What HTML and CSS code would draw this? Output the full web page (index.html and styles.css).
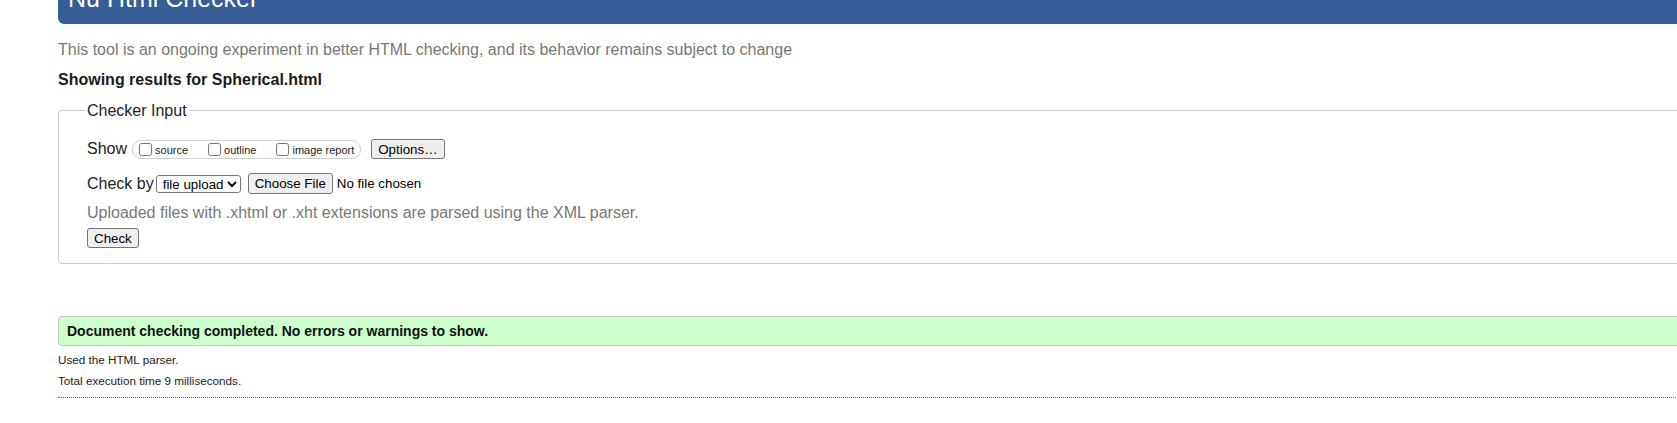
FILE: index.html
```html
<!DOCTYPE html>
<html lang="en">
<head>
<meta charset="utf-8">
<title>Nu Html Checker</title>
<link rel="stylesheet" href="styles.css">
</head>
<body>
<div class="page">
  <h1 class="title">Nu Html Checker</h1>
  <p class="intro">This tool is an ongoing experiment in better HTML checking, and its behavior remains subject to change</p>
  <h2 class="showing">Showing results for Spherical.html</h2>
  <form class="checker">
    <fieldset class="input-set">
      <legend class="legend">Checker Input</legend>
      <div class="row row-show">
        <span class="label">Show</span>
        <span class="group">
          <label class="opt"><input type="checkbox" class="cb"><span>source</span></label>
          <label class="opt"><input type="checkbox" class="cb"><span>outline</span></label>
          <label class="opt last"><input type="checkbox" class="cb"><span>image report</span></label>
        </span>
        <button type="button" class="btn btn-options">Options…</button>
      </div>
      <div class="row row-by">
        <span class="label label-by">Check by</span>
        <select class="sel"><option>file upload</option></select>
        <input type="file" class="file">
      </div>
      <p class="hint">Uploaded files with .xhtml or .xht extensions are parsed using the XML parser.</p>
      <div class="row row-submit">
        <button type="button" class="btn">Check</button>
      </div>
    </fieldset>
  </form>
  <section class="results">
    <p class="ok">Document checking completed. No errors or warnings to show.</p>
    <p class="detail">Used the HTML parser.</p>
    <p class="detail">Total execution time 9 milliseconds.</p>
    <hr class="sep">
  </section>
</div>
</body>
</html>
```
FILE: styles.css
```css
html {
  overflow: hidden;
  background: #fff;
}
body {
  margin: 0;
  font-family: "Liberation Sans", Arial, sans-serif;
  color: #222;
}
.page {
  margin-left: 58px;
  width: 1700px;
}
.title {
  margin: -16px 0 0;
  padding: 0 10px 11px;
  font-size: 25px;
  line-height: 29px;
  font-weight: normal;
  color: #fff;
  background: #365d95;
  border-radius: 0 0 6px 6px;
}
.intro {
  margin: 17px 0 0;
  font-size: 16px;
  line-height: 18px;
  color: #777;
}
.showing {
  margin: 12px 0 0;
  font-size: 16px;
  line-height: 18px;
  font-weight: bold;
  color: #1a1a1a;
}
.checker {
  margin: 12px 0 0;
}
.input-set {
  margin: 0;
  padding: 19px 20px 15px 28px;
  border: 1px solid #cbcbcb;
  border-radius: 4px;
}
.legend {
  margin-left: -2px;
  padding: 0 2px;
  font-size: 16px;
  line-height: 19px;
  color: #222;
}
.row {
  display: flex;
  align-items: center;
}
.row-show {
  height: 20px;
}
.row-by {
  height: 21px;
  margin-top: 14px;
}
.row-submit {
  height: 20px;
  margin-top: 6px;
}
.label {
  font-size: 16px;
  line-height: 18px;
  margin-right: 5px;
}
.label-by {
  margin-right: 2px;
}
.group {
  display: inline-flex;
  align-items: center;
  height: 17px;
  padding: 0 6px 0 2px;
  border: 1px solid #cfcfcf;
  border-radius: 9px;
}
.opt {
  display: inline-flex;
  align-items: center;
  font-size: 11px;
  margin-right: 16px;
}
.opt.last {
  margin-right: 0;
}
.opt span {
  padding-top: 2px;
}
.cb {
  width: 13px;
  height: 13px;
  margin: 0 3px 0 4px;
}
.btn {
  box-sizing: border-box;
  height: 20px;
  padding: 1px 6px;
  font-family: "Liberation Sans", Arial, sans-serif;
  font-size: 13.33px;
  line-height: 15px;
  color: #000;
  background: #efefef;
  border: 1px solid #767676;
  border-radius: 3px;
}
.btn-options {
  margin-left: 10px;
}
.sel {
  box-sizing: border-box;
  width: 85px;
  height: 18px;
  margin: 0;
  padding: 0 0 0 2px;
  font-family: "Liberation Sans", Arial, sans-serif;
  font-size: 13.33px;
  color: #000;
  background: #fff;
  border: 1px solid #767676;
  border-radius: 3px;
}
.file {
  margin-left: 7px;
  font-family: "Liberation Sans", Arial, sans-serif;
  font-size: 13.33px;
  color: #000;
}
.file::file-selector-button {
  box-sizing: border-box;
  height: 21px;
  margin-right: 4px;
  padding: 1px 6px;
  font-family: "Liberation Sans", Arial, sans-serif;
  font-size: 13.33px;
  color: #000;
  background: #efefef;
  border: 1px solid #767676;
  border-radius: 3px;
}
.hint {
  margin: 10px 0 0;
  font-size: 16px;
  line-height: 18px;
  color: #777;
}
.results {
  margin-top: 52px;
}
.ok {
  margin: 0;
  padding: 6px 8px;
  font-size: 14px;
  line-height: 16px;
  font-weight: bold;
  color: #111;
  background: #ccffcc;
  border: 1px solid #bccbbc;
  border-radius: 4px;
}
.detail {
  margin: 7px 0 0;
  font-size: 11.7px;
  line-height: 14px;
  color: #222;
}
.sep {
  margin: 9px 0 0;
  height: 0;
  border: 0;
  border-top: 1px dotted #666;
}
```
